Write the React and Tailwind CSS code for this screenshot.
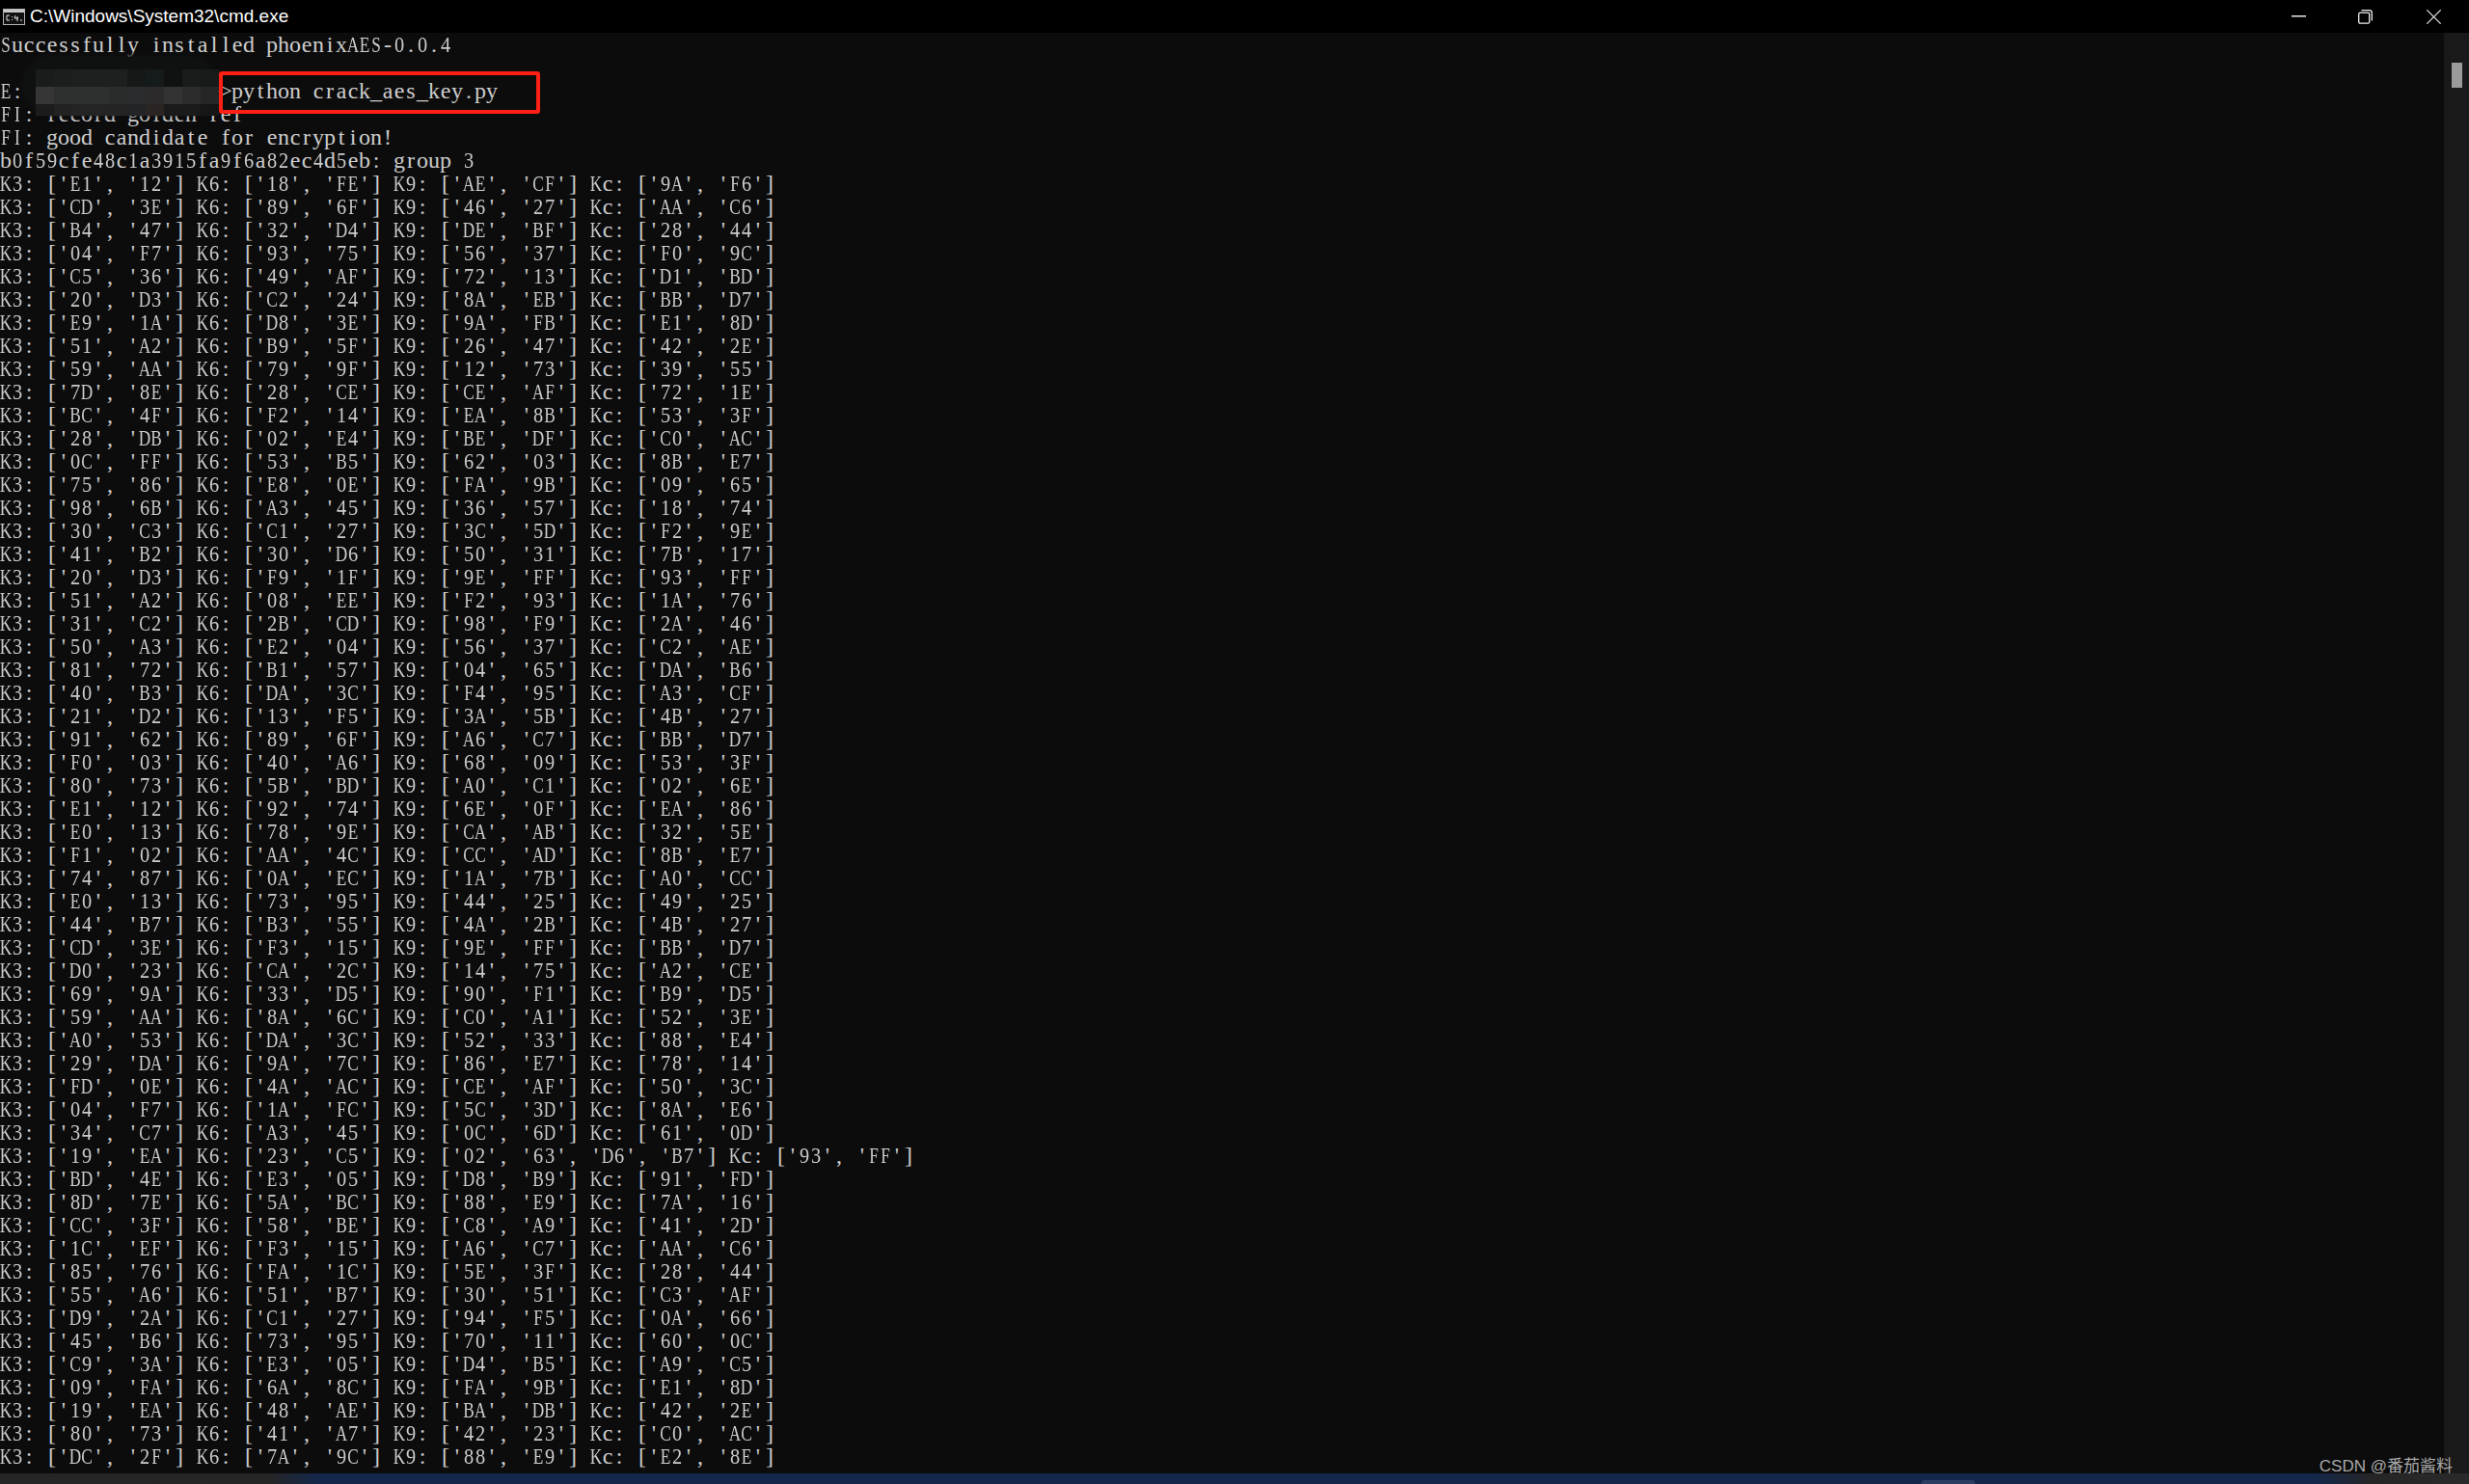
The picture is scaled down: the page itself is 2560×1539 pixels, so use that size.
const rows = `E1 12 18 FE AE CF 9A F6
CD 3E 89 6F 46 27 AA C6
B4 47 32 D4 DE BF 28 44
04 F7 93 75 56 37 F0 9C
C5 36 49 AF 72 13 D1 BD
20 D3 C2 24 8A EB BB D7
E9 1A D8 3E 9A FB E1 8D
51 A2 B9 5F 26 47 42 2E
59 AA 79 9F 12 73 39 55
7D 8E 28 CE CE AF 72 1E
BC 4F F2 14 EA 8B 53 3F
28 DB 02 E4 BE DF C0 AC
0C FF 53 B5 62 03 8B E7
75 86 E8 0E FA 9B 09 65
98 6B A3 45 36 57 18 74
30 C3 C1 27 3C 5D F2 9E
41 B2 30 D6 50 31 7B 17
20 D3 F9 1F 9E FF 93 FF
51 A2 08 EE F2 93 1A 76
31 C2 2B CD 98 F9 2A 46
50 A3 E2 04 56 37 C2 AE
81 72 B1 57 04 65 DA B6
40 B3 DA 3C F4 95 A3 CF
21 D2 13 F5 3A 5B 4B 27
91 62 89 6F A6 C7 BB D7
F0 03 40 A6 68 09 53 3F
80 73 5B BD A0 C1 02 6E
E1 12 92 74 6E 0F EA 86
E0 13 78 9E CA AB 32 5E
F1 02 AA 4C CC AD 8B E7
74 87 0A EC 1A 7B A0 CC
E0 13 73 95 44 25 49 25
44 B7 B3 55 4A 2B 4B 27
CD 3E F3 15 9E FF BB D7
D0 23 CA 2C 14 75 A2 CE
69 9A 33 D5 90 F1 B9 D5
59 AA 8A 6C C0 A1 52 3E
A0 53 DA 3C 52 33 88 E4
29 DA 9A 7C 86 E7 78 14
FD 0E 4A AC CE AF 50 3C
04 F7 1A FC 5C 3D 8A E6
34 C7 A3 45 0C 6D 61 0D
19 EA 23 C5 02 63 D6 B7 93 FF
BD 4E E3 05 D8 B9 91 FD
8D 7E 5A BC 88 E9 7A 16
CC 3F 58 BE C8 A9 41 2D
1C EF F3 15 A6 C7 AA C6
85 76 FA 1C 5E 3F 28 44
55 A6 51 B7 30 51 C3 AF
D9 2A C1 27 94 F5 0A 66
45 B6 73 95 70 11 60 0C
C9 3A E3 05 D4 B5 A9 C5
09 FA 6A 8C FA 9B E1 8D
19 EA 48 AE BA DB 42 2E
80 73 41 A7 42 23 C0 AC
DC 2F 7A 9C 88 E9 E2 8E`.split("\n").map((r) => r.split(" "));

function keyLine(v) {
  const p = (a, b) => `['${a}', '${b}']`;
  if (v.length === 10) {
    return `K3: ${p(v[0], v[1])} K6: ${p(v[2], v[3])} K9: ['${v[4]}', '${v[5]}', '${v[6]}', '${v[7]}'] Kc: ${p(v[8], v[9])}`;
  }
  return `K3: ${p(v[0], v[1])} K6: ${p(v[2], v[3])} K9: ${p(v[4], v[5])} Kc: ${p(v[6], v[7])}`;
}

const head = [
  "Successfully installed phoenixAES-0.0.4",
  "",
  "E:                 >python crack_aes_key.py",
  "FI: record golden ref",
  "FI: good candidate for encryption!",
  "b0f59cfe48c1a3915fa9f6a82ec4d5eb: group 3",
];

const mosaic = [
  "#1a1c1c","#1c1e1e","#1e2020","#1e2020","#1e2020","#161818","#151a1a","#101212","#1a1c1c","#181a1a",
  "#363636","#2e3030","#2e3030","#2e3030","#2a2c2c","#2a2c2e","#2c2a2a","#323232","#2c2c2c","#262626",
  "#1c1c1c","#222222","#242424","#242424","#242424","#222428","#2a2522","#1a1a1a","#1a1a1a","#161616",
];

function cellClass(c) {
  if (c === "m") return "scale-x-[0.6]";
  if (c === "w") return "scale-x-[0.7]";
  if (/[A-Z]/.test(c)) return "scale-x-[0.72]";
  if (/[0-9]/.test(c)) return "scale-x-[0.85]";
  return "";
}

function Cell({ c }) {
  return <span className={`inline-flex w-[12px] justify-center whitespace-pre ${cellClass(c)}`}>{c}</span>;
}

export default function App() {
  const lines = [...head, ...rows.map(keyLine)];
  return (
    <div className="relative flex h-[1539px] w-[2560px] flex-col overflow-hidden bg-[#0c0c0c]">
      <div className="flex h-[34px] shrink-0 items-center bg-black">
        <svg width="23" height="17" viewBox="0 0 23 17" className="ml-[3px] shrink-0">
          <rect x="0.5" y="0.5" width="22" height="16" fill="#111" stroke="#b5b5b5" />
          <rect x="1" y="1" width="21" height="3" fill="#c8c8c8" />
          <path d="M4 7H7M4 7V12H7M9.5 8V9M9.5 11V12M13 7L12 10H16M15 8V13M18 12H20" stroke="#e8e8e8" fill="none" />
        </svg>
        <span className="ml-[5px] font-['Liberation_Sans',sans-serif] text-[19px] leading-[34px] text-white">C:\Windows\System32\cmd.exe</span>
        <div className="ml-auto flex h-full items-center">
          <svg width="15" height="2" className="mr-[54px]"><rect width="15" height="1.5" fill="#e8e8e8" /></svg>
          <svg width="15" height="15" viewBox="0 0 15 15" className="mr-[56px]" fill="none" stroke="#f0f0f0" strokeWidth="1.3">
            <rect x="0.7" y="3.2" width="11" height="11" rx="1.5" />
            <path d="M3.5 0.7H11.5C13 0.7 14.3 2 14.3 3.5V11.5" />
          </svg>
          <svg width="15" height="15" viewBox="0 0 15 15" className="mr-[29px]" stroke="#e8e8e8" strokeWidth="1.2">
            <path d="M0.3 0.3L14.7 14.7M14.7 0.3L0.3 14.7" />
          </svg>
        </div>
      </div>
      <div className="flex min-h-0 flex-1">
        <div className="min-w-0 flex-1 font-['Liberation_Serif',serif] text-[24px] text-[#cccccc]">
          {lines.map((l, i) => (
            <div key={i} className="h-[24px] whitespace-pre leading-[24px]">
              {[...l].map((c, j) => (
                <Cell key={j} c={c} />
              ))}
            </div>
          ))}
        </div>
        <div className="w-[26px] shrink-0 bg-[#191919] px-2 pt-[31px]">
          <div className="h-[26px] w-[11px] bg-[#9b9b9b]" />
        </div>
      </div>
      <div className="h-[11px] shrink-0 bg-[linear-gradient(90deg,#262626_0px,#252525_280px,#13274a_330px,#13274a_2400px,#252525_2460px,#2a2a2a_2560px)]" />

      <div className="absolute bottom-0 left-[1992px] h-[4px] w-[56px] rounded-t-[4px] bg-[#2c3f63]" />
      <div className="absolute left-[22px] top-[57px] h-[63px] w-[205px] rounded-[30px] bg-[#0f1010] blur-[2px]" />
      <div className="absolute left-[37px] top-[72px] grid h-[48px] w-[190px] grid-cols-10 grid-rows-[18px_18px_12px]">
        {mosaic.map((c, i) => (
          <div key={i} style={{ backgroundColor: c }} />
        ))}
      </div>
      <div className="absolute left-[227px] top-[74px] h-[44px] w-[333px] rounded-[3px] border-4 border-[#ff2015]" />
      <div className="absolute bottom-[8px] right-[17px] font-['Liberation_Sans','Noto_Sans_CJK_SC',sans-serif] text-[17px] leading-[20px] text-[#a8a8a8]">CSDN @番茄酱料</div>
    </div>
  );
}
